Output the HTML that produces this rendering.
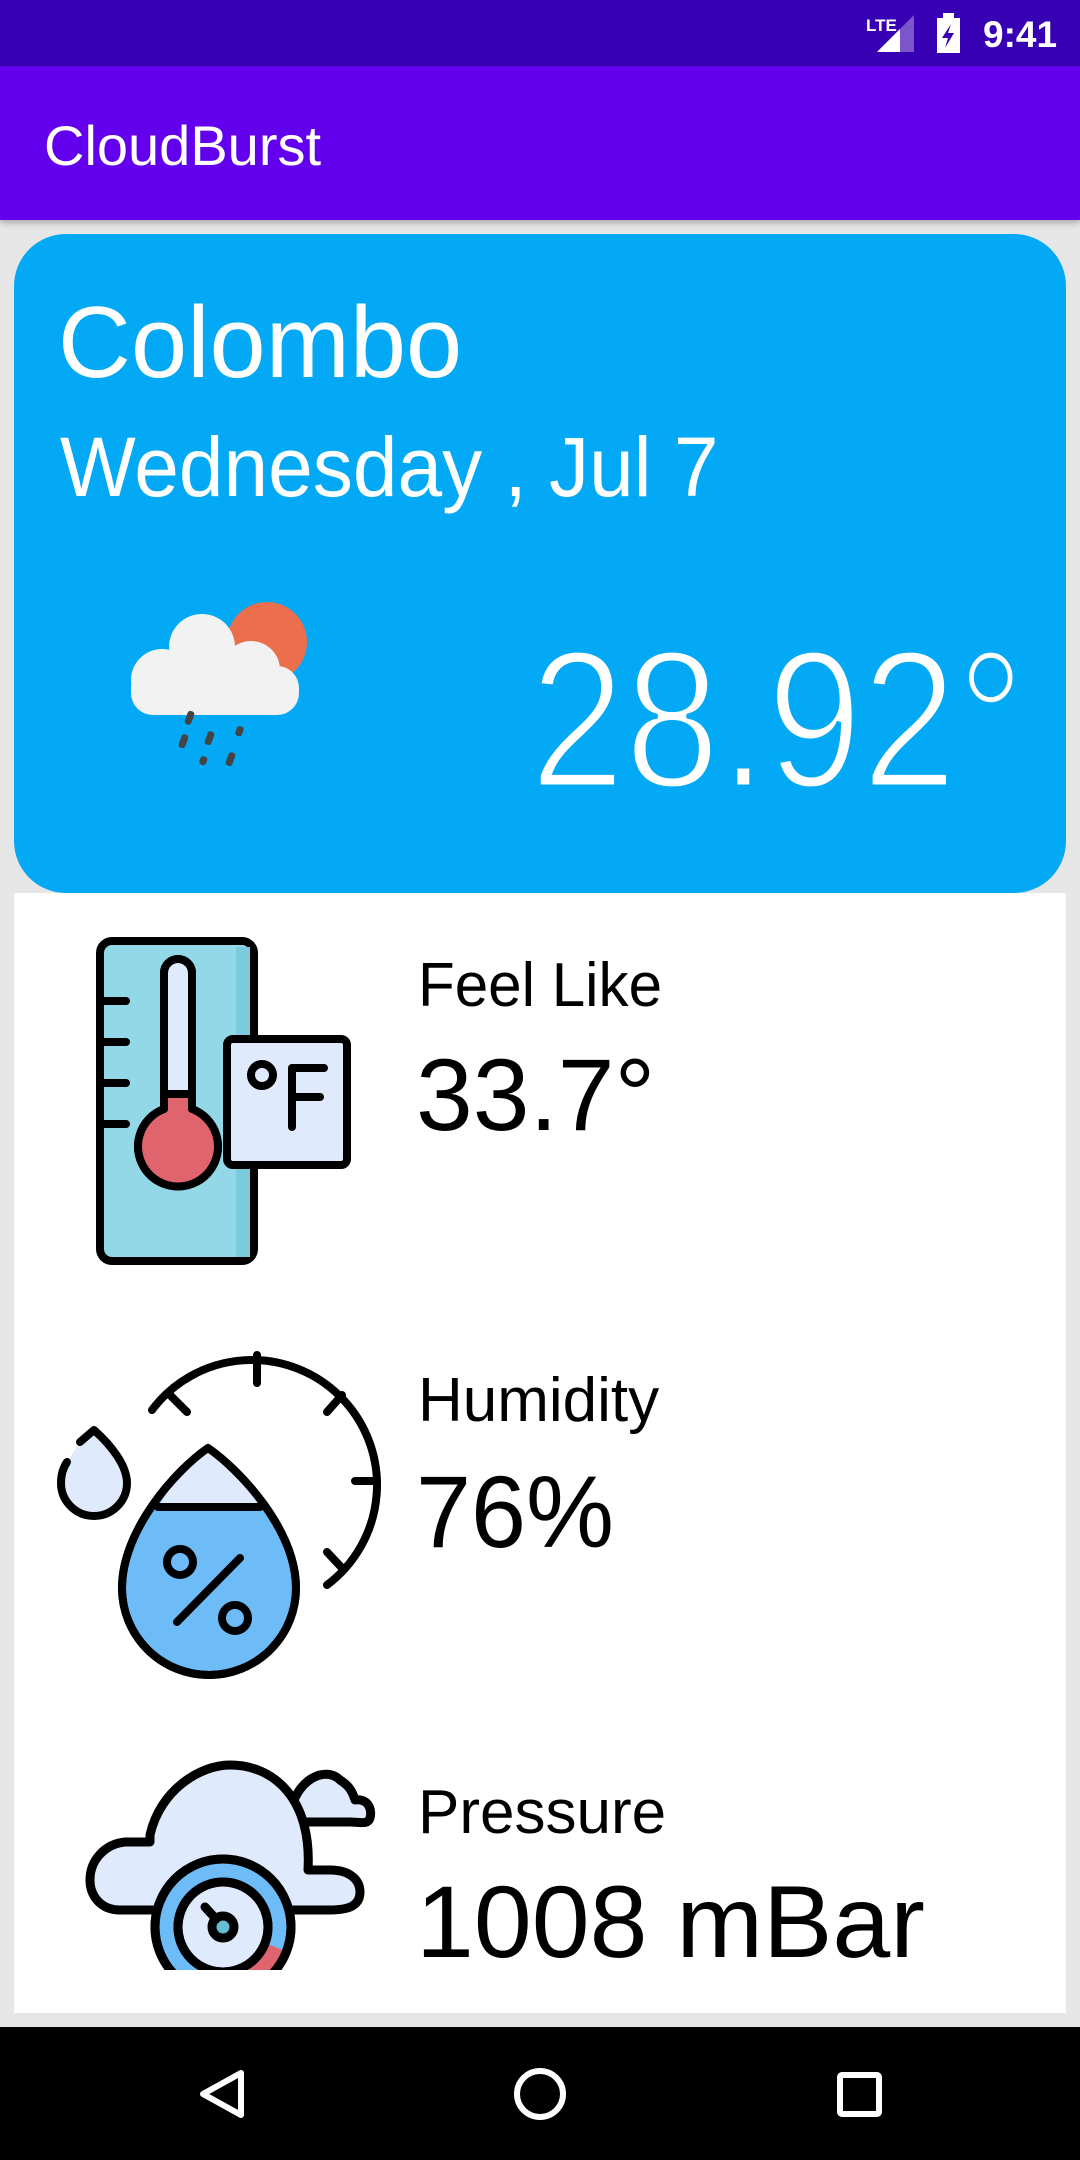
<!DOCTYPE html>
<html><head><meta charset="utf-8"><style>
*{margin:0;padding:0;box-sizing:border-box}
body{width:1080px;height:2160px;background:#e6e6e6;position:relative;overflow:hidden;font-family:"Liberation Sans",sans-serif}
.abs{position:absolute}
.t{position:absolute;white-space:nowrap;line-height:1;transform-origin:0 0}
</style></head><body>
<div class="abs" style="left:0;top:0;width:1080px;height:66px;background:#3700b3"></div>
<svg class="abs" style="left:860px;top:0" width="220" height="66" viewBox="860 0 220 66">
<text x="866" y="31" fill="#fff" font-family="Liberation Sans" font-weight="bold" font-size="17">LTE</text>
<polygon points="877,52 914,15 914,52" fill="#7a55cc"/>
<polygon points="877,52 900,29 900,52" fill="#fff"/>
<rect x="937" y="18" width="23" height="35" fill="#fff"/><rect x="943" y="13" width="11" height="6" fill="#fff"/>
<polygon points="951,24 942,38 948,38 945,48 954,33 948,33" fill="#3700b3"/>
<text x="983" y="47" fill="#fff" font-family="Liberation Sans" font-weight="bold" font-size="37">9:41</text>
</svg>
<div class="abs" style="left:0;top:66px;width:1080px;height:154px;background:#6200ee;box-shadow:0 3px 6px rgba(0,0,0,.25)"></div>
<div class="t" style="left:44px;top:118px;font-size:56px;color:#fff">CloudBurst</div>

<div class="abs" style="left:14px;top:234px;width:1052px;height:659px;background:#03a9f4;border-radius:52px"></div>
<div class="t" style="left:58px;top:293px;font-size:101px;color:#fff">Colombo</div>
<div class="t" style="left:60px;top:425px;font-size:84px;color:#fff;transform:scaleX(0.955)">Wednesday , Jul 7</div>
<div class="t" style="left:530px;top:622px;font-size:196px;color:#fff;transform:scaleX(0.87);-webkit-text-stroke:5px #03a9f4">28.92°</div>
<svg class="abs" style="left:0;top:0" width="1080" height="900">
<circle cx="267" cy="642" r="40" fill="#ec6f4d"/>
<g fill="#f2f2f2">
<circle cx="202" cy="647" r="33"/><circle cx="162" cy="680" r="31"/><circle cx="251" cy="670" r="29"/>
<rect x="131" y="666" width="168" height="49" rx="22"/>
</g>
<g fill="#444">
<rect x="186" y="711" width="7" height="14" rx="3" transform="rotate(20 190 718)"/>
<rect x="180" y="734" width="7" height="14" rx="3" transform="rotate(20 183 741)"/>
<rect x="206" y="731" width="7" height="14" rx="3" transform="rotate(20 209 738)"/>
<rect x="236" y="726" width="7" height="10" rx="3" transform="rotate(20 239 731)"/>
<rect x="200" y="756" width="7" height="9" rx="3" transform="rotate(20 203 760)"/>
<rect x="227" y="752" width="7" height="14" rx="3" transform="rotate(20 230 759)"/>
</g>
</svg>

<div class="abs" style="left:14px;top:893px;width:1052px;height:1120px;background:#fff"></div>
<div class="t" style="left:418px;top:955px;font-size:62px;color:#000;transform:scaleX(0.97)">Feel Like</div>
<div class="t" style="left:416px;top:1044px;font-size:102px;color:#000">33.7°</div>
<div class="t" style="left:418px;top:1370px;font-size:62px;color:#000">Humidity</div>
<div class="t" style="left:416px;top:1461px;font-size:102px;color:#000;transform:scaleX(0.97)">76%</div>
<div class="t" style="left:418px;top:1782px;font-size:62px;color:#000">Pressure</div>
<div class="t" style="left:416px;top:1871px;font-size:102px;color:#000;transform:scaleX(1.02)">1008 mBar</div>

<!-- thermometer -->
<svg class="abs" style="left:96px;top:937px" width="260" height="330" viewBox="0 0 260 330" fill="none" stroke="#000" stroke-width="8" stroke-linecap="round" stroke-linejoin="round">
<rect x="4" y="4" width="154" height="320" rx="12" fill="#93d8e6"/>
<rect x="140" y="10" width="14" height="310" fill="#7ccbdc" stroke="none"/>
<path d="M68 36 a14 14 0 0 1 28 0 V172 a40 40 0 1 1 -28 0 Z" fill="#dfeafd"/>
<path d="M68 157 H96 V172 a40 40 0 1 1 -28 0 Z" fill="#e0646e" stroke="none"/>
<path d="M68 36 a14 14 0 0 1 28 0 V172 a40 40 0 1 1 -28 0 Z M68 157 H96"/>
<path d="M4 64 H30 M4 105 H30 M4 146 H30 M4 187 H30"/>
<rect x="131" y="102" width="120" height="126" rx="6" fill="#dfeafd"/>
<circle cx="166" cy="138" r="11"/>
<path d="M196 190 V131 H228 M196 160 H224"/>
</svg>

<!-- humidity -->
<svg class="abs" style="left:0;top:1340px" width="400" height="350" viewBox="0 1340 400 350" fill="none" stroke="#000" stroke-width="8" stroke-linecap="round" stroke-linejoin="round">
<path d="M152 1410 A125 125 0 1 1 327 1585"/>
<path d="M257 1355 V1383 M170 1395 L187 1412 M342 1395 L327 1412 M377 1481 H355 M342 1568 L327 1552"/>
<path d="M80 1442 L94 1430 C112 1446 127 1466 127 1483 A33 33 0 0 1 61 1483 C61 1474 63 1468 67 1462" fill="#dfeafd"/>
<path d="M208 1448 C240 1470 296 1530 296 1588 A87 87 0 0 1 122 1588 C122 1530 176 1470 208 1448 Z" fill="#6ebcf7"/>
<path d="M208 1448 C225 1460 245 1482 260 1507 H158 C172 1482 192 1460 208 1448 Z" fill="#dfeafd" stroke="none"/>
<path d="M208 1448 C240 1470 296 1530 296 1588 A87 87 0 0 1 122 1588 C122 1530 176 1470 208 1448 Z M158 1507 H260"/>
<circle cx="180" cy="1562" r="13"/><circle cx="235" cy="1618" r="13"/>
<path d="M177 1622 L240 1558"/>
</svg>

<!-- pressure -->
<svg class="abs" style="left:80px;top:1760px" width="300" height="210" viewBox="0 0 300 210" fill="none" stroke="#000" stroke-width="9" stroke-linecap="round" stroke-linejoin="round">
<path d="M210 55 C215 20 245 5 260 20 C268 25 272 30 275 40 C290 38 292 52 290 58 C288 65 280 62 270 62 H225 Z" fill="#dfeafd"/>
<path d="M70 75 C80 30 120 5 150 5 C195 5 232 40 228 110 H250 C270 110 280 120 280 132 C280 145 270 150 250 150 H40 C20 150 10 135 10 120 C10 100 25 84 45 82 H70 Z" fill="#dfeafd"/>
<circle cx="143" cy="167" r="68" fill="#6ebcf7"/>
<path d="M203 190 A68 68 0 0 1 180 226 L143 167 Z" fill="#e0646e" stroke="none"/>
<circle cx="143" cy="167" r="45" fill="#dfeafd"/>
<circle cx="143" cy="167" r="68"/>
<circle cx="143" cy="167" r="45"/>
<circle cx="143" cy="167" r="11" fill="#62bdd3"/>
<path d="M125 147 L136 159"/>
</svg>
<div class="abs" style="left:14px;top:1970px;width:1052px;height:43px;background:#fff"></div>

<div class="abs" style="left:0;top:2027px;width:1080px;height:133px;background:#000"></div>
<svg class="abs" style="left:0;top:2027px" width="1080" height="133" fill="none" stroke="#fff" stroke-width="6" stroke-linejoin="round">
<polygon points="241,46 241,88 203,67"/>
<circle cx="540" cy="67" r="23"/>
<rect x="840" y="48" width="39" height="39" rx="2"/>
</svg>
</body></html>
